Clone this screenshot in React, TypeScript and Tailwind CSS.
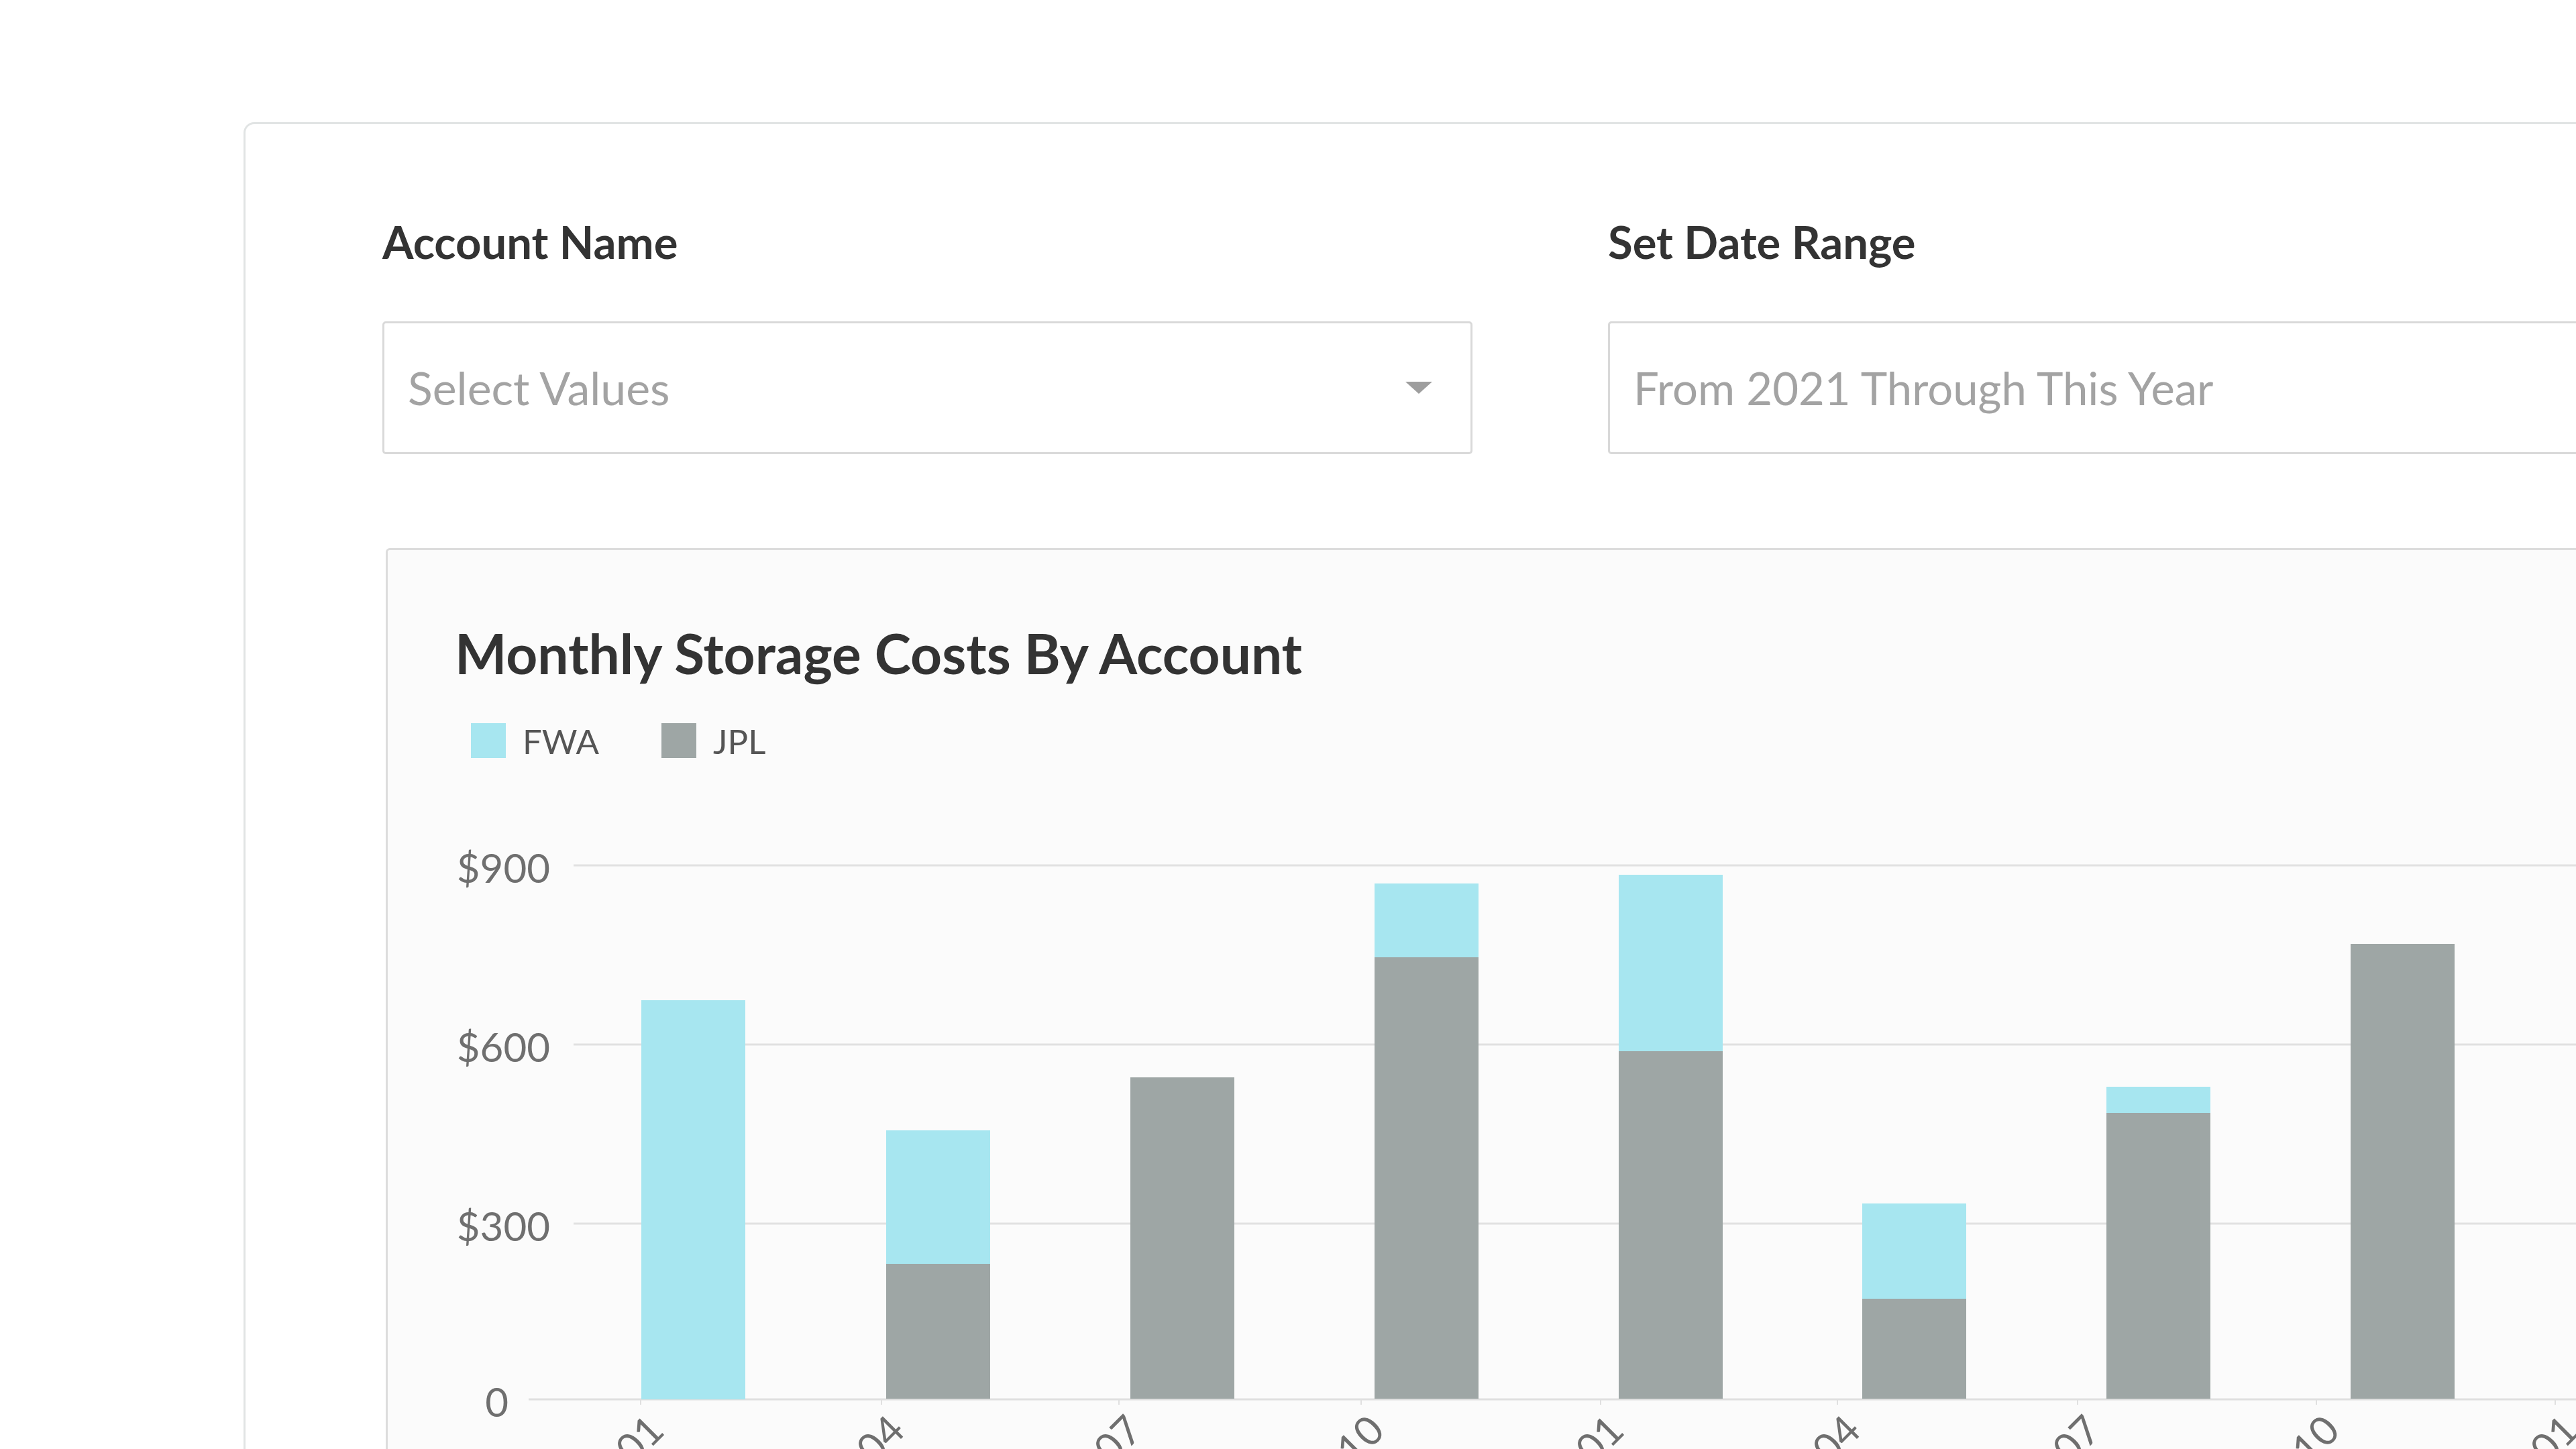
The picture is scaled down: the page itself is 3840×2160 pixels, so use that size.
import React from "react";

const FWA = "#a7e6f0";
const JPL = "#9ea6a5";

const bars = [
  { x: 378, fwaTop: 311, jplTop: 906 },
  { x: 743, fwaTop: 505, jplTop: 704 },
  { x: 1107, fwaTop: 426, jplTop: 426 },
  { x: 1471, fwaTop: 137, jplTop: 247 },
  { x: 1835, fwaTop: 124, jplTop: 387 },
  { x: 2198, fwaTop: 614, jplTop: 756 },
  { x: 2562, fwaTop: 440, jplTop: 479 },
  { x: 2926, fwaTop: 227, jplTop: 227 },
];

const ticks = [
  { x: 377, label: "2021-01" },
  { x: 736, label: "2021-04" },
  { x: 1090, label: "2021-07" },
  { x: 1451, label: "2021-10" },
  { x: 1808, label: "2022-01" },
  { x: 2161, label: "2022-04" },
  { x: 2519, label: "2022-07" },
  { x: 2875, label: "2022-10" },
  { x: 3231, label: "2023-01" },
];

const grid = [
  { y: 110, label: "$900" },
  { y: 377, label: "$600" },
  { y: 644, label: "$300" },
];

const BAR_W = 155;
const ZERO = 906;

function Chart() {
  return (
    <svg
      width={3300}
      height={1000}
      className="block mt-[50px] overflow-visible"
      style={{ fontFamily: "Lato, 'Noto Sans', sans-serif" }}
    >
      {grid.map((g) => (
        <g key={g.label}>
          <line x1={277} x2={3300} y1={g.y} y2={g.y} stroke="#e1e1e1" strokeWidth={3} />
          <text x={242} y={g.y + 26} textAnchor="end" fontSize={60} fill="#6f6f6f">
            {g.label}
          </text>
        </g>
      ))}
      <line x1={210} x2={3300} y1={ZERO} y2={ZERO} stroke="#dfdfdf" strokeWidth={3} />
      <text x={180} y={ZERO + 26} textAnchor="end" fontSize={60} fill="#6f6f6f">
        0
      </text>
      {ticks.map((t) => (
        <g key={t.label}>
          <line x1={t.x} x2={t.x} y1={ZERO} y2={ZERO + 8} stroke="#e0e0e0" strokeWidth={2} />
          <text
            x={t.x + 38}
            y={ZERO + 50}
            textAnchor="end"
            fontSize={60}
            fill="#6f6f6f"
            transform={`rotate(-45 ${t.x + 38} ${ZERO + 50})`}
          >
            {t.label}
          </text>
        </g>
      ))}
      {bars.map((b, i) => (
        <g key={i}>
          {b.jplTop > b.fwaTop && (
            <rect x={b.x} y={b.fwaTop} width={BAR_W} height={b.jplTop - b.fwaTop} fill={FWA} />
          )}
          {ZERO - 1 > b.jplTop && (
            <rect x={b.x} y={b.jplTop} width={BAR_W} height={ZERO - 1 - b.jplTop} fill={JPL} />
          )}
        </g>
      ))}
    </svg>
  );
}

function Triangle() {
  return (
    <svg width={40} height={18} viewBox="0 0 40 18" className="block shrink-0">
      <polygon points="0,0 40,0 20,18" fill="#9e9e9e" />
    </svg>
  );
}

export default function App() {
  return (
    <div
      className="w-[3840px] h-[2160px] overflow-hidden bg-white"
      style={{ fontFamily: "Lato, 'Noto Sans', sans-serif" }}
    >
      <div className="ml-[363px] mt-[182px] w-[3600px] h-[2200px] border-[3px] border-[#e1e4e4] rounded-[16px] bg-white pl-[204px] pt-[142px]">
        <div className="grid grid-cols-[1625px_1625px] gap-x-[202px]">
          <div>
            <div className="text-[67px] leading-none font-bold text-[#333333]">Account Name</div>
            <div className="mt-[85px] h-[198px] border-[3px] border-[#d9d9d9] rounded-[5px] bg-white flex items-center justify-between pl-[35px] pr-[57px]">
              <span className="text-[68px] leading-none text-[#a3a3a3]">Select Values</span>
              <Triangle />
            </div>
          </div>
          <div>
            <div className="text-[67px] leading-none font-bold text-[#333333]">Set Date Range</div>
            <div className="mt-[85px] h-[198px] border-[3px] border-[#d9d9d9] rounded-[5px] bg-white flex items-center pl-[35px]">
              <span className="text-[67px] leading-none text-[#a3a3a3]">From 2021 Through This Year</span>
            </div>
          </div>
        </div>
        <div className="ml-[5px] mt-[140px] w-[3400px] h-[1500px] border-[3px] border-[#dcdcdc] rounded-[6px] bg-[#fbfbfb] pt-[112px]">
          <div className="pl-[100px] text-[82px] leading-none font-bold text-[#333333]">
            Monthly Storage Costs By Account
          </div>
          <div className="pl-[124px] mt-[64px] flex items-center gap-[93px]">
            <div className="flex items-center gap-[25px]">
              <div className="w-[52px] h-[52px] bg-[#a7e6f0]" />
              <span className="text-[51px] leading-none text-[#555555]">FWA</span>
            </div>
            <div className="flex items-center gap-[25px]">
              <div className="w-[52px] h-[52px] bg-[#9ea6a5]" />
              <span className="text-[51px] leading-none text-[#555555]">JPL</span>
            </div>
          </div>
          <Chart />
        </div>
      </div>
    </div>
  );
}
